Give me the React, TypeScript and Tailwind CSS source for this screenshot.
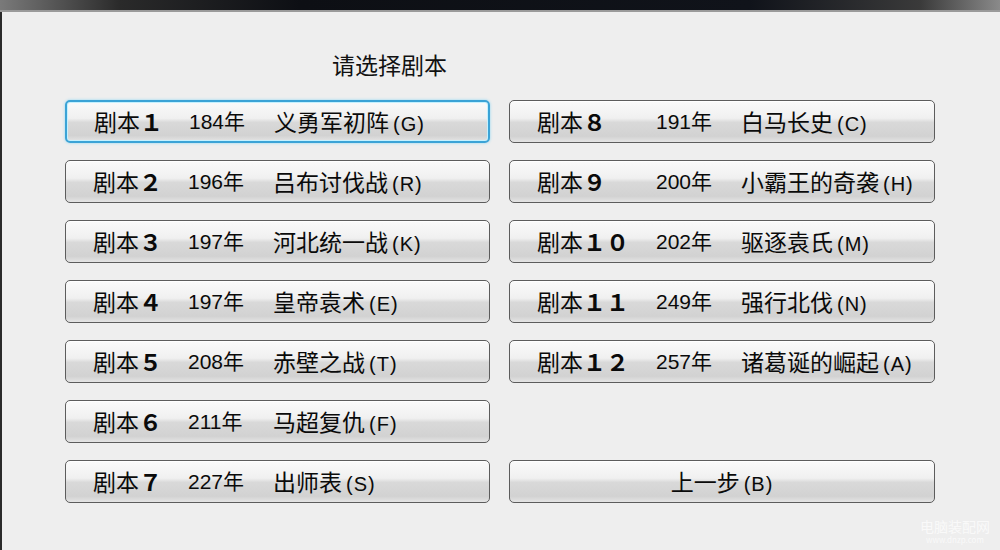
import React from "react";

const left = [
  { n: "１", year: "184年", title: "义勇军初阵", key: "(G)" },
  { n: "２", year: "196年", title: "吕布讨伐战", key: "(R)" },
  { n: "３", year: "197年", title: "河北统一战", key: "(K)" },
  { n: "４", year: "197年", title: "皇帝袁术", key: "(E)" },
  { n: "５", year: "208年", title: "赤壁之战", key: "(T)" },
  { n: "６", year: "211年", title: "马超复仇", key: "(F)" },
  { n: "７", year: "227年", title: "出师表", key: "(S)" },
];

const right = [
  { n: "８", year: "191年", title: "白马长史", key: "(C)" },
  { n: "９", year: "200年", title: "小霸王的奇袭", key: "(H)" },
  { n: "１０", year: "202年", title: "驱逐袁氏", key: "(M)" },
  { n: "１１", year: "249年", title: "强行北伐", key: "(N)" },
  { n: "１２", year: "257年", title: "诸葛诞的崛起", key: "(A)" },
];

const font = { fontFamily: '"Liberation Sans", "Noto Sans CJK SC", sans-serif' };
const cjk = { fontFamily: '"Noto Sans CJK SC", sans-serif' };

const btnBase =
  "h-[43px] rounded-[5px] flex text-[#0a0a0a] bg-[linear-gradient(to_bottom,#fafafa_0%,#f0f0f0_42%,#d9d9d9_52%,#d2d2d2_86%,#e4e4e4_100%)]";

const ScenarioButton = ({
  item,
  labelW,
  active,
}: {
  item: { n: string; year: string; title: string; key: string };
  labelW: string;
  active?: boolean;
}) => {
  return (
    <div
      className={
        btnBase +
        " items-center pl-[27px] " +
        (active
          ? "border-2 border-[#3ba3d6] shadow-[0_0_3px_#8fd6f2,inset_0_0_0_1px_#c4f1ff]"
          : "border border-[#5c5c5c] shadow-[inset_0_1px_0_#ffffff]")
      }
    >
      <div className={"flex items-baseline text-[23px] " + labelW} style={cjk}>
        <span>剧本</span>
        <span className="font-bold">{item.n}</span>
      </div>
      <div className="w-[85px] text-[21px]" style={font}>
        {item.year}
      </div>
      <div className="flex items-baseline text-[23px]" style={font}>
        <span style={cjk}>{item.title}</span>
        <span className="ml-[4px] text-[20px] tracking-[1px]">{item.key}</span>
      </div>
    </div>
  );
};

export default function App() {
  return (
    <div className="relative w-[1000px] h-[550px] overflow-hidden bg-[#eeeeee] flex flex-col">
      <div className="h-[10px] bg-[linear-gradient(to_right,#7a7a7a_0%,#2a2a2a_12%,#0d0f14_30%,#10131a_75%,#3a3a3a_92%,#8a8a8a_100%)]" />
      <div className="h-[2px] bg-[#9a9a9a]" />
      <div className="flex-1 flex flex-col border-l-2 border-[#2a2a2a] bg-[#eeeeee]">
        <div className="pl-[330px] pt-[35px] h-[88px] text-[23px] text-[#111]" style={cjk}>
          请选择剧本
        </div>
        <div className="ml-[63px] flex gap-[19px]">
          <div className="w-[425px] flex flex-col gap-[17px]">
            {left.map((it, i) => (
              <ScenarioButton key={i} item={it} labelW="w-[95px]" active={i === 0} />
            ))}
          </div>
          <div className="w-[426px] flex flex-col gap-[17px]">
            {right.map((it, i) => (
              <ScenarioButton key={i} item={it} labelW="w-[119px]" />
            ))}
            <div className="h-[43px]" />
            <div
              className={
                btnBase +
                " items-center justify-center border border-[#5c5c5c] shadow-[inset_0_1px_0_#ffffff]"
              }
            >
              <div className="flex items-baseline text-[23px]" style={font}>
                <span style={cjk}>上一步</span>
                <span className="ml-[4px] text-[20px] tracking-[1px]">(B)</span>
              </div>
            </div>
          </div>
        </div>
      </div>
      <div
        className="absolute right-[10px] bottom-[6px] flex flex-col items-center text-white/70 leading-none"
        style={cjk}
      >
        <span className="text-[14px]">电脑装配网</span>
        <span className="text-[8px] mt-[3px]">www.dnzp.com</span>
      </div>
    </div>
  );
}
